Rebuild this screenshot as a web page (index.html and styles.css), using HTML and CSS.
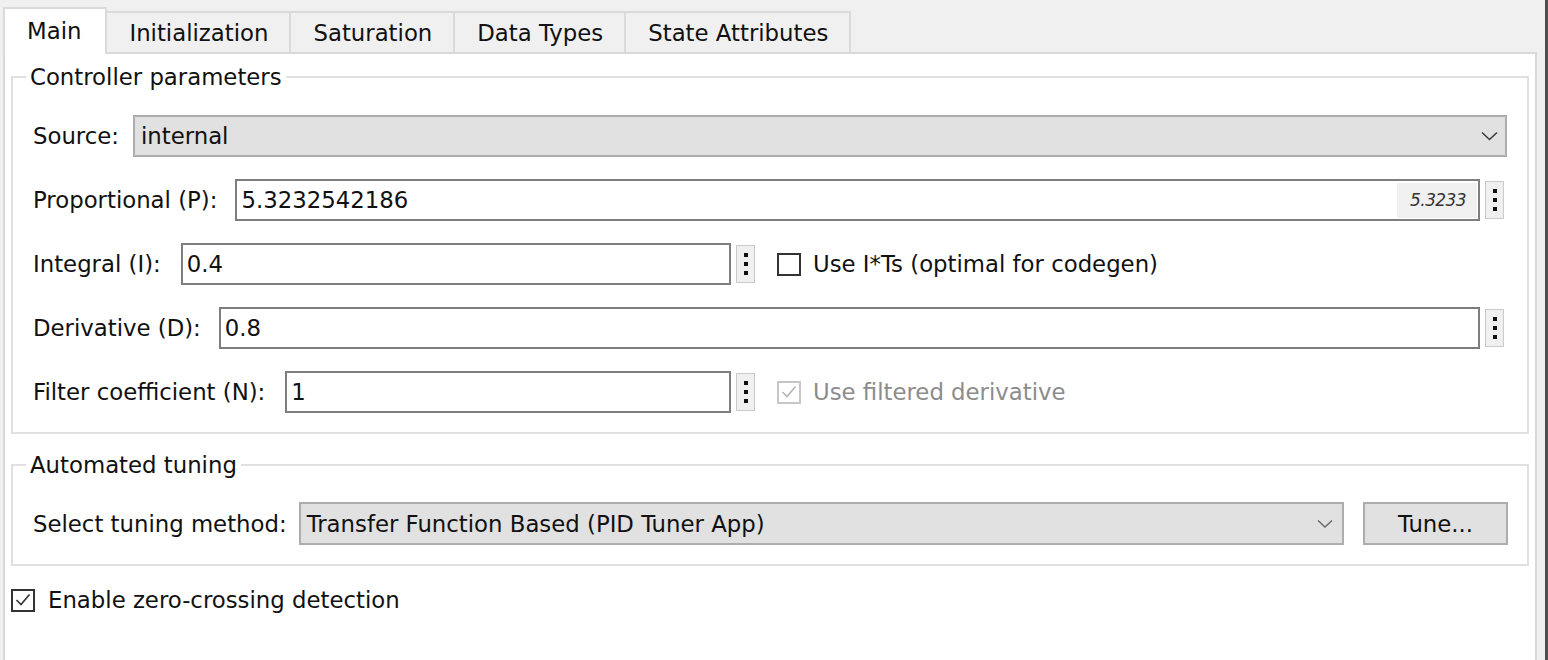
FILE: index.html
```html
<!DOCTYPE html>
<html>
<head>
<meta charset="utf-8">
<title>PID Controller</title>
<link rel="stylesheet" href="styles.css">
</head>
<body>
<div class="app">
  <div class="dialog">
    <div class="tabbar">
      <div class="tab active">Main</div>
      <div class="tab">Initialization</div>
      <div class="tab">Saturation</div>
      <div class="tab">Data Types</div>
      <div class="tab">State Attributes</div>
    </div>
    <div class="panel">
      <fieldset class="group group-ctrl">
        <legend>Controller parameters</legend>
        <div class="row tight">
          <span class="label">Source:</span>
          <div class="combo grow">
            <span class="combo-text">internal</span>
            <svg class="chev" width="17" height="10" viewBox="0 0 17 10"><path d="M1 1.5 L8.5 8.5 L16 1.5" fill="none" stroke="#3c3c3c" stroke-width="1.6"/></svg>
          </div>
        </div>
        <div class="row">
          <span class="label">Proportional (P):</span>
          <div class="field grow">
            <span class="value">5.3232542186</span>
            <span class="badge">5.3233</span>
          </div>
          <div class="more end"><i></i><i></i><i></i></div>
        </div>
        <div class="row">
          <div class="split">
            <span class="label">Integral (I):</span>
            <div class="field grow"><span class="value">0.4</span></div>
          </div>
          <div class="more"><i></i><i></i><i></i></div>
          <div class="check">
            <span class="box"></span>
            <span>Use I*Ts (optimal for codegen)</span>
          </div>
        </div>
        <div class="row">
          <span class="label">Derivative (D):</span>
          <div class="field grow"><span class="value">0.8</span></div>
          <div class="more end"><i></i><i></i><i></i></div>
        </div>
        <div class="row">
          <div class="split">
            <span class="label">Filter coefficient (N):</span>
            <div class="field grow"><span class="value">1</span></div>
          </div>
          <div class="more"><i></i><i></i><i></i></div>
          <div class="check disabled">
            <span class="box"><svg width="20" height="20" viewBox="0 0 20 20"><path d="M3.5 10 L8 14.5 L16.5 4.5" fill="none" stroke="#b4b4b4" stroke-width="1.6"/></svg></span>
            <span>Use filtered derivative</span>
          </div>
        </div>
      </fieldset>

      <fieldset class="group group-tune">
        <legend>Automated tuning</legend>
        <div class="row tall">
          <span class="label">Select tuning method:</span>
          <div class="combo grow">
            <span class="combo-text">Transfer Function Based (PID Tuner App)</span>
            <svg class="chev light" width="16" height="9" viewBox="0 0 16 9"><path d="M1 1.5 L8 8 L15 1.5" fill="none" stroke="#6a6a6a" stroke-width="1.5"/></svg>
          </div>
          <div class="button">Tune...</div>
        </div>
      </fieldset>

      <div class="check zc">
        <span class="box"><svg width="20" height="20" viewBox="0 0 20 20"><path d="M3.5 10 L8 14.5 L16.5 4.5" fill="none" stroke="#333" stroke-width="1.6"/></svg></span>
        <span>Enable zero-crossing detection</span>
      </div>
    </div>
  </div>
</div>
</body>
</html>
```

FILE: styles.css
```css
* { box-sizing: border-box; }

html, body {
  margin: 0;
  padding: 0;
  height: 660px;
  overflow: hidden;
  background: #f0f0f0;
}

body {
  font-family: "DejaVu Sans", Verdana, sans-serif;
  font-size: 22.8px;
  color: #111;
}

.app {
  width: 1548px;
  height: 660px;
  display: flex;
  padding-left: 3px;
  padding-right: 8px;
  border-right: 3px solid #4e4e4e;
}

.dialog {
  flex: 1;
  display: flex;
  flex-direction: column;
  min-width: 0;
}

/* Tabs */
.tabbar {
  height: 52px;
  display: flex;
  align-items: flex-end;
  flex: none;
}

.tab {
  height: 41px;
  padding: 0 21px 0 22px;
  display: flex;
  align-items: center;
  line-height: 26px;
  background: #f0f0f0;
  border-top: 2px solid #dadada;
  border-right: 2px solid #dadada;
  color: #111;
  white-space: nowrap;
}

.tab.active {
  height: 47px;
  margin-bottom: -2px;
  padding: 0 24px 2px 22px;
  background: #fff;
  border-left: 2px solid #dadada;
  position: relative;
  z-index: 1;
}

/* Panel */
.panel {
  flex: 1;
  background: #fff;
  border: 2px solid #d9d9d9;
  border-bottom: none;
  padding: 10px 6px 0 6px;
}

.group {
  margin: 0;
  min-width: 0;
  border: 2px solid #e0e0e0;
  padding: 25px 20px 19px 20px;
  display: flex;
  flex-direction: column;
  gap: 22px;
}

.group legend {
  padding: 0 4px;
  margin-left: -7px;
  line-height: 26px;
  color: #111;
}

.group-tune {
  margin-top: 18px;
  padding: 24px 19px 19px 20px;
}

.row {
  height: 42px;
  display: flex;
  align-items: center;
  gap: 18px;
}

.row.tight {
  gap: 14px;
}

.row.tall {
  height: 43px;
  gap: 12px;
}

.row.tall .button {
  margin-left: 7px;
}

.split {
  width: 698px;
  height: 100%;
  display: flex;
  align-items: center;
  gap: 20px;
  flex: none;
}

.label {
  white-space: nowrap;
  flex: none;
  line-height: 26px;
}

.grow {
  flex: 1;
  min-width: 0;
}

.field {
  height: 42px;
  border: 2px solid #7e7e7e;
  background: #fff;
  display: flex;
  align-items: center;
  padding: 0 1px 0 4px;
}

.value {
  flex: 1;
  white-space: nowrap;
  line-height: 26px;
}

.badge {
  height: 35px;
  line-height: 35px;
  padding: 0 11px 0 13px;
  background: #f0f0f0;
  font-style: italic;
  font-size: 17px;
  color: #333;
  letter-spacing: -0.6px;
}

.combo {
  height: 42px;
  background: #e1e1e1;
  border: 2px solid #adadad;
  display: flex;
  align-items: center;
  padding: 0 7px 0 6px;
}

.row.tall .combo {
  height: 43px;
}

.combo-text {
  flex: 1;
  white-space: nowrap;
  line-height: 26px;
}

.chev {
  flex: none;
  display: block;
}

.chev.light {
  margin-right: 2px;
}

.more {
  width: 19px;
  height: 38px;
  flex: none;
  background: #f0f0f0;
  border: 1px solid #c9c9c9;
  display: flex;
  flex-direction: column;
  align-items: center;
  justify-content: center;
  gap: 5px;
  margin-left: -13px;
}

.more.end {
  margin-right: 3px;
}

.more i {
  width: 4px;
  height: 4px;
  background: #111;
  display: block;
}

.check {
  display: flex;
  align-items: center;
  gap: 12px;
  white-space: nowrap;
  line-height: 26px;
  margin-left: 4px;
}

.check .box {
  width: 24px;
  height: 23px;
  border: 2px solid #333;
  background: #fff;
  flex: none;
  display: flex;
  align-items: center;
  justify-content: center;
}

.check .box svg {
  display: block;
}

.check.disabled {
  color: #8c8c8c;
}

.check.disabled .box {
  border-color: #c6c6c6;
}

.button {
  width: 145px;
  height: 43px;
  flex: none;
  background: #e1e1e1;
  border: 2px solid #adadad;
  display: flex;
  align-items: center;
  justify-content: center;
  line-height: 26px;
}

.check.zc {
  margin: 21px 0 0 0;
  gap: 13px;
}
```
